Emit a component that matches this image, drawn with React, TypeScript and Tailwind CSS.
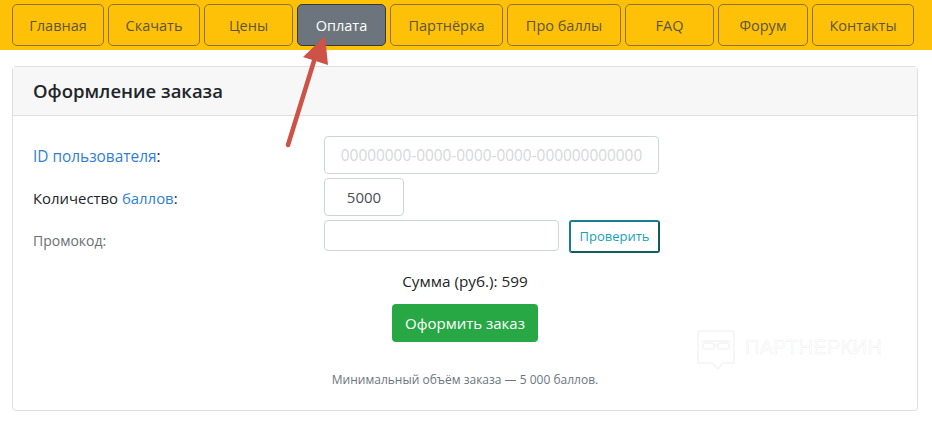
import React from "react";

const navItems = [
  { label: "Главная", width: "w-[92px]" },
  { label: "Скачать", width: "w-[92px]" },
  { label: "Цены", width: "w-[89px]" },
  { label: "Оплата", width: "w-[89px]", active: true },
  { label: "Партнёрка", width: "w-[113px]" },
  { label: "Про баллы", width: "w-[114px]" },
  { label: "FAQ", width: "w-[89px]" },
  { label: "Форум", width: "w-[90px]" },
  { label: "Контакты", width: "w-[102px]" },
];

export default function App() {
  return (
    <div className="relative h-[421px] w-[932px] overflow-hidden bg-white font-['Open_Sans','Noto_Sans',sans-serif] text-[#212529]">
      <nav className="flex h-[50px] gap-1 bg-[#ffc107] pl-3 pt-1">
        {navItems.map((item) => (
          <a
            key={item.label}
            className={`flex h-[42px] items-center justify-center rounded-[5px] border pt-[2px] text-[14.5px] ${item.width} ${
              item.active
                ? "border-[#343a40] bg-[#6c757d] text-white"
                : "border-[#8a7430] text-[#5c5540]"
            }`}
          >
            {item.label}
          </a>
        ))}
      </nav>

      <div className="relative mx-3 mt-4 h-[345px] w-[906px] rounded-[4px] border border-[#dfdfdf]">
        <div className="flex h-[49px] items-center border-b border-[#dfdfdf] bg-[#f7f7f7] pl-5 text-[18.5px] font-semibold">
          Оформление заказа
        </div>

        <div className="px-5 pt-5">
          <div className="flex h-[38px] items-center">
            <div className="w-[291px] pt-1 text-[15.4px]">
              <a className="text-[#2f7fd6]">ID пользователя</a>:
            </div>
            <input
              readOnly
              placeholder="00000000-0000-0000-0000-000000000000"
              className="h-[38px] w-[335px] rounded-[4px] border border-[#ced4da] text-center text-[15.4px] outline-none placeholder:text-[#d6d8da]"
            />
          </div>

          <div className="mt-1 flex h-[38px] items-center">
            <div className="w-[291px] pt-[2px] text-[14.9px]">
              Количество <a className="text-[#2f7fd6]">баллов</a>:
            </div>
            <input
              readOnly
              value="5000"
              className="h-[38px] w-[80px] rounded-[4px] border border-[#ced4da] text-center text-[15px] text-[#495057] outline-none"
            />
          </div>

          <div className="mt-1 flex h-[33px] items-start">
            <div className="w-[291px] pt-[11px] text-[14px] leading-5 text-[#6b6f73]">Промокод:</div>
            <input
              readOnly
              className="h-[31px] w-[235px] rounded-[4px] border border-[#ced4da] outline-none"
            />
            <button className="ml-[10px] h-[33px] w-[91px] rounded-[3px] border-2 border-[#17808f] border-b-[#125a64] border-r-[#125a64] text-[13px] text-[#17a2b8]">
              Проверить
            </button>
          </div>

          <div className="mt-[18px] flex flex-col items-center">
            <p className="text-[15.3px] leading-5">Сумма (руб.): 599</p>
            <button className="mt-[13px] h-[38px] w-[146px] rounded-[4px] bg-[#28a745] text-[15px] text-white">
              Оформить заказ
            </button>
            <p className="mt-[30px] text-[12px] leading-4 text-[#6c757d]">
              Минимальный объём заказа — 5 000 баллов.
            </p>
          </div>
        </div>

        {/* watermark */}
        <div className="absolute left-[684px] top-[263px] flex items-start gap-[10px]">
          <svg width="38" height="42" viewBox="0 0 38 42" fill="none" stroke="#f4f4f4" strokeWidth="1.5">
            <path d="M3 1h32a2 2 0 0 1 2 2v28a2 2 0 0 1-2 2H26l-5 6-6-6H3a2 2 0 0 1-2-2V3a2 2 0 0 1 2-2z" />
            <rect x="6" y="13" width="11" height="6" rx="2" />
            <rect x="21" y="13" width="11" height="6" rx="2" />
            <path d="M5 11h28M17 15h4" />
          </svg>
          <span className="mt-[5px] font-['Liberation_Sans',sans-serif] text-[20px] leading-6 tracking-[0.3px] text-transparent [-webkit-text-stroke:0.5px_#f0f0f0]">
            ПАРТНЕРКИН
          </span>
        </div>
      </div>

      {/* red arrow over the menu */}
      <svg className="absolute left-[270px] top-[25px]" width="80" height="130" viewBox="0 0 80 130">
        <path d="M18 120 L44 36" stroke="#cd5247" strokeWidth="4.5" strokeLinecap="round" fill="none" />
        <path d="M55 11 L33 32 L58 40 Z" fill="#cd5247" />
      </svg>
    </div>
  );
}
